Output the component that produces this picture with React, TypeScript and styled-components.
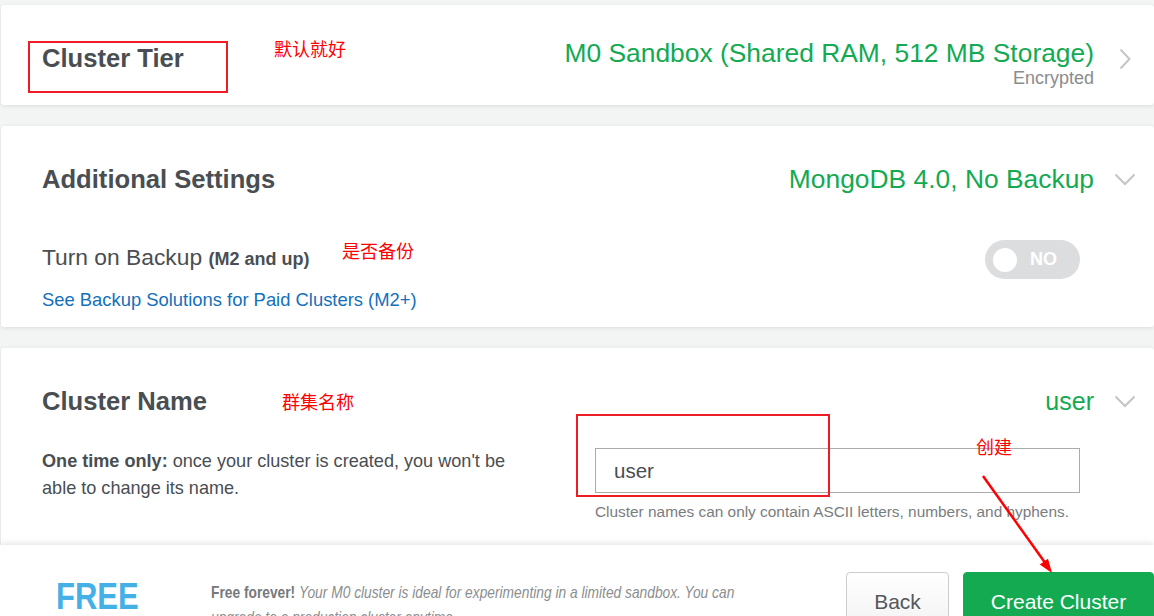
import React from "react";
import styled, { createGlobalStyle } from "styled-components";

const GlobalStyle = createGlobalStyle`
  html, body {
    margin: 0;
    padding: 0;
    background: #f3f4f4;
    font-family: "Liberation Sans", Arial, sans-serif;
  }
  * { box-sizing: border-box; }
`;

const Page = styled.div`
  position: relative;
  width: 1154px;
  height: 616px;
  overflow: hidden;
  display: flex;
  flex-direction: column;
`;

const Main = styled.main`
  flex: 1;
  min-height: 0;
  overflow: hidden;
  display: flex;
  flex-direction: column;
  gap: 21px;
  padding: 5px 0 0 1px;
`;

const Card = styled.section`
  flex-shrink: 0;
  background: #ffffff;
  border-radius: 3px;
  box-shadow: 0 1px 4px rgba(0, 0, 0, 0.1);
  padding: 0 19px 0 41px;
`;

const Header = styled.div`
  display: flex;
  align-items: center;
  height: 100px;
  padding-top: 6px;
`;

const Title = styled.h2`
  flex: 1;
  margin: 0;
  font-size: 25.6px;
  font-weight: 700;
  color: #494e52;
  line-height: 30px;
`;

const Summary = styled.div<{ $withSub?: boolean }>`
  display: flex;
  flex-direction: column;
  align-items: flex-end;
  padding-top: ${(p) => (p.$withSub ? "9px" : "0")};
`;

const SummaryText = styled.span<{ $size?: number }>`
  color: #13aa52;
  font-size: ${(p) => p.$size ?? 26.4}px;
  line-height: 30px;
`;

const SubText = styled.span`
  color: #8a8b8d;
  font-size: 18px;
  line-height: 20px;
`;

const ChevronBox = styled.span`
  display: flex;
  width: 20px;
  height: 20px;
  margin-left: 21px;
  margin-top: 2px;
`;

const Row = styled.div`
  display: flex;
  align-items: center;
  justify-content: space-between;
  margin-top: 14px;
  padding-right: 55px;
`;

const Label = styled.span`
  font-size: 22.8px;
  line-height: 26px;
  margin-top: -4px;
  color: #494e52;
`;

const LabelNote = styled.strong`
  font-size: 18px;
  font-weight: 700;
`;

const Toggle = styled.button`
  display: flex;
  align-items: center;
  width: 95px;
  height: 39px;
  padding: 0 8px;
  border: none;
  border-radius: 20px;
  background: #dcdddf;
  cursor: pointer;
`;

const Knob = styled.span`
  width: 24px;
  height: 24px;
  border-radius: 50%;
  background: #ffffff;
`;

const ToggleText = styled.span`
  margin-left: 13px;
  color: #ffffff;
  font-family: "Liberation Sans", Arial, sans-serif;
  font-size: 18px;
  font-weight: 700;
`;

const Link = styled.a`
  display: block;
  margin-top: 10px;
  padding-bottom: 16px;
  font-size: 18.4px;
  line-height: 22px;
  color: #1470bb;
  text-decoration: none;
`;

const Body = styled.div`
  display: flex;
  justify-content: space-between;
  padding: 0 55px 60px 0;
`;

const Note = styled.p`
  margin: 0;
  width: 480px;
  font-size: 18.1px;
  line-height: 27px;
  color: #494e52;
`;

const Field = styled.div`
  width: 485px;
  display: flex;
  flex-direction: column;
`;

const Input = styled.input`
  width: 100%;
  height: 45px;
  border: 1px solid #ababab;
  border-radius: 0;
  padding: 0 18px;
  font-family: "Liberation Sans", Arial, sans-serif;
  font-size: 20.5px;
  color: #494e52;
  outline: none;
`;

const Helper = styled.span`
  margin-top: 10px;
  font-size: 15.4px;
  color: #7a7d80;
`;

const Footer = styled.footer`
  position: relative;
  z-index: 1;
  flex-shrink: 0;
  height: 71px;
  display: flex;
  align-items: flex-start;
  padding: 27px 0 0 56px;
  background: #ffffff;
  box-shadow: 0 -2px 6px rgba(0, 0, 0, 0.1);
`;

const FreeBox = styled.div`
  width: 155px;
  flex-shrink: 0;
`;

const Free = styled.div`
  display: inline-block;
  margin-top: 7px;
  font-family: "Liberation Sans", Arial, sans-serif;
  font-size: 36px;
  font-weight: 700;
  line-height: 36px;
  color: #45b0e6;
  transform: scaleX(0.86);
  transform-origin: left center;
`;

const FooterTextBox = styled.div`
  width: 560px;
  flex-shrink: 0;
  overflow: visible;
`;

const FooterText = styled.p`
  margin: 8px 0 0;
  width: 690px;
  font-family: "Liberation Sans", Arial, sans-serif;
  font-size: 17px;
  line-height: 25px;
  color: #8b8e90;
  transform: scaleX(0.81);
  transform-origin: left top;

  strong { color: #76797c; }
  em { font-style: italic; }
`;

const Buttons = styled.div`
  margin-left: auto;
  display: flex;
  gap: 14px;
`;

const Button = styled.button<{ $primary?: boolean }>`
  height: 60px;
  width: ${(p) => (p.$primary ? 191 : 103)}px;
  border-radius: 4px;
  font-family: "Liberation Sans", Arial, sans-serif;
  font-size: 21px;
  cursor: pointer;
  padding: 0;
  color: ${(p) => (p.$primary ? "#ffffff" : "#555759")};
  background: ${(p) => (p.$primary ? "#13aa52" : "linear-gradient(#ffffff, #f2f2f2)")};
  border: 1px solid ${(p) => (p.$primary ? "#13aa52" : "#cccccc")};
`;

/* Annotation overlay (drawn over the screenshot) */
const RedBox = styled.div`
  position: absolute;
  border: 2px solid #ee1c25;
  pointer-events: none;
  z-index: 5;
`;

const RedNote = styled.span`
  position: absolute;
  z-index: 5;
  color: #ff0000;
  font-family: "Noto Sans CJK SC", sans-serif;
  font-size: 18px;
  line-height: 18px;
  white-space: nowrap;
`;

const ArrowLayer = styled.svg`
  position: absolute;
  left: 0;
  top: 0;
  z-index: 5;
  pointer-events: none;
`;

const ChevronRight = () => (
  <svg width="20" height="20" viewBox="0 0 20 20">
    <path d="M5.5 0.5 L14.5 10 L5.5 19.5" fill="none" stroke="#c4c5c6" strokeWidth="2" />
  </svg>
);

const ChevronDown = () => (
  <svg width="20" height="20" viewBox="0 0 20 20">
    <path d="M0.5 4.5 L10 14 L19.5 4.5" fill="none" stroke="#c4c5c6" strokeWidth="2" />
  </svg>
);

export default function App() {
  return (
    <Page>
      <GlobalStyle />
      <Main>
        <Card>
          <Header>
            <Title>Cluster Tier</Title>
            <Summary $withSub>
              <SummaryText>M0 Sandbox (Shared RAM, 512 MB Storage)</SummaryText>
              <SubText>Encrypted</SubText>
            </Summary>
            <ChevronBox>
              <ChevronRight />
            </ChevronBox>
          </Header>
        </Card>

        <Card>
          <Header>
            <Title>Additional Settings</Title>
            <Summary>
              <SummaryText>MongoDB 4.0, No Backup</SummaryText>
            </Summary>
            <ChevronBox>
              <ChevronDown />
            </ChevronBox>
          </Header>
          <Row>
            <Label>
              Turn on Backup <LabelNote>(M2 and up)</LabelNote>
            </Label>
            <Toggle type="button">
              <Knob />
              <ToggleText>NO</ToggleText>
            </Toggle>
          </Row>
          <Link href="#">See Backup Solutions for Paid Clusters (M2+)</Link>
        </Card>

        <Card>
          <Header>
            <Title>Cluster Name</Title>
            <Summary>
              <SummaryText $size={25}>user</SummaryText>
            </Summary>
            <ChevronBox>
              <ChevronDown />
            </ChevronBox>
          </Header>
          <Body>
            <Note>
              <strong>One time only:</strong> once your cluster is created, you won't be able to change its name.
            </Note>
            <Field>
              <Input defaultValue="user" />
              <Helper>Cluster names can only contain ASCII letters, numbers, and hyphens.</Helper>
            </Field>
          </Body>
        </Card>
      </Main>

      <Footer>
        <FreeBox>
          <Free>FREE</Free>
        </FreeBox>
        <FooterTextBox>
          <FooterText>
            <strong>Free forever!</strong>{" "}
            <em>Your M0 cluster is ideal for experimenting in a limited sandbox. You can upgrade to a production cluster anytime.</em>
          </FooterText>
        </FooterTextBox>
        <Buttons>
          <Button type="button">Back</Button>
          <Button type="button" $primary>
            Create Cluster
          </Button>
        </Buttons>
      </Footer>

      <RedBox style={{ left: 28, top: 41, width: 200, height: 52 }} />
      <RedBox style={{ left: 576, top: 414, width: 254, height: 83 }} />
      <RedNote style={{ left: 274, top: 39 }}>默认就好</RedNote>
      <RedNote style={{ left: 342, top: 241 }}>是否备份</RedNote>
      <RedNote style={{ left: 282, top: 392 }}>群集名称</RedNote>
      <RedNote style={{ left: 976, top: 437 }}>创建</RedNote>
      <ArrowLayer width="1154" height="616" viewBox="0 0 1154 616">
        <line x1="983" y1="476" x2="1046" y2="564" stroke="#ff0000" strokeWidth="2.5" />
        <polygon points="1052,573 1039.8,564.5 1048,558.7" fill="#ff0000" />
      </ArrowLayer>
    </Page>
  );
}
